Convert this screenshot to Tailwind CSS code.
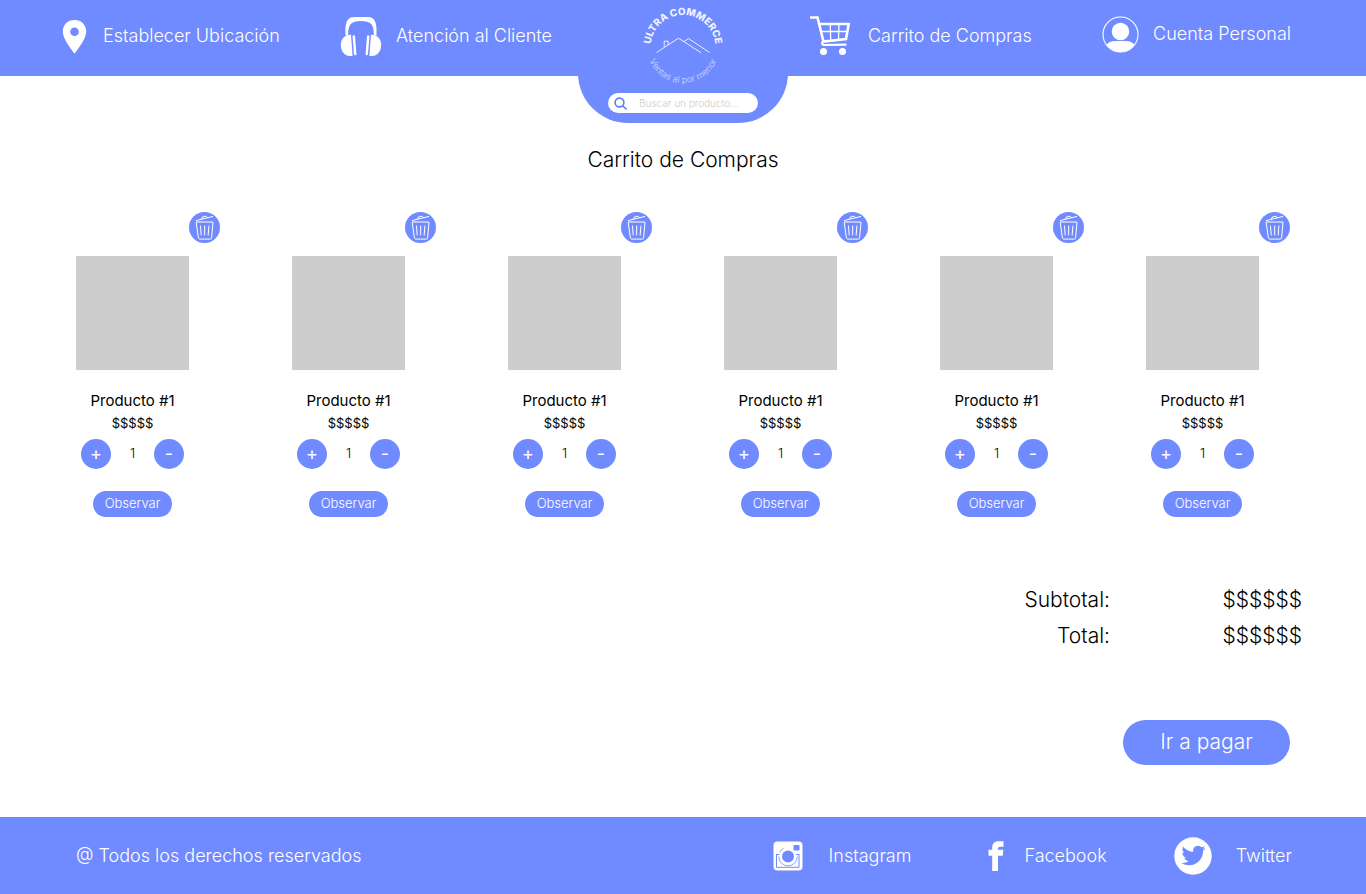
<!DOCTYPE html>
<html lang="es">
<head>
<meta charset="utf-8">
<meta name="viewport" content="width=device-width, initial-scale=1">
<title>Ultra Commerce – Carrito de Compras</title>
<script src="https://cdn.jsdelivr.net/npm/@tailwindcss/browser@4"></script>
</head>
<body class="flex min-h-screen flex-col bg-white font-['Inter','Liberation_Sans',sans-serif] text-black">

<!-- Shared icon -->
<svg class="hidden" aria-hidden="true">
  <symbol id="trash" viewBox="0 0 31 31">
    <g fill="none" stroke="#fff" stroke-width="1" stroke-linecap="round" stroke-linejoin="round">
      <path d="M7.500 10h16.500l-1.400 15.800q-.2 1.300-1.400 1.300h-10.400q-1.200 0-1.400-1.300z"/>
      <path d="M7.300 8.600L23.700 4.500M12.500 7l.5-1.800 4-1 1.200 1.400"/>
      <path d="M11.500 14l.7 9M15.700 14v9M19.900 14l-.7 9"/>
    </g>
  </symbol>
</svg>

<header class="grid h-[76px] shrink-0 grid-cols-[1fr_210px_1fr] bg-[#708aff] text-lg leading-6 font-light text-white">
  <nav class="flex h-[72px] items-center justify-between pr-[26px] pl-[62px]" aria-label="Servicios">
    <a href="#" class="flex items-center gap-4 whitespace-nowrap">
      <svg class="h-[35px] w-[25px]" viewBox="0 0 25 35" fill="#fff" aria-hidden="true"><path fill-rule="evenodd" d="M12.500 1C5.500 1 .8 5.800.8 12.500c0 7 7.200 16 11.700 22.300C17 28.500 24.200 19.500 24.200 12.500 24.200 5.800 19.500 1 12.500 1zm0 7.500a4.300 4.300 0 1 1 0 8.600 4.300 4.300 0 0 1 0-8.600z"/></svg>
      Establecer Ubicación
    </a>
    <a href="#" class="flex items-center gap-[14px] whitespace-nowrap">
      <svg class="h-[41px] w-[42px]" viewBox="0 0 42 41" fill="#fff" aria-hidden="true">
        <path d="M5.500 19.500C5 7 6.500 1.200 14 1h14c7.500.2 9 6 8.500 18.500l-2.700-.5C34 8.500 31 5 21 5S8 8.500 8.200 19z"/>
        <path d="M11 18.800l1.600 21.200H10C4 40 .8 34.500.8 29c0-4.800 2.700-9 6.500-9.800zM31 18.800l-1.600 21.200H32c6 0 9.200-5.500 9.200-11 0-4.800-2.700-9-6.500-9.800z"/>
        <path d="M13.800 20.500l1.400 17.500M28.200 20.500L26.800 38" stroke="#fff" stroke-width="2.500" stroke-linecap="round"/>
      </svg>
      Atención al Cliente
    </a>
  </nav>

  <div class="relative z-10 flex h-[123px] flex-col items-center rounded-b-[50px] bg-[#708aff]">
    <a href="#" aria-label="Ultra Commerce">
      <svg class="block h-[93px] w-[90px]" viewBox="0 0 90 93" fill="none">
        <path id="arcTop" d="M12.500 50v-2.500a32.500 32.500 0 0 1 65 0V50"/>
        <path id="arcBottom" d="M8.500 46.500a36.500 36.500 0 0 0 73 0"/>
        <text fill="#fff" fill-opacity=".9" font-size="10" font-weight="800" text-anchor="middle"><textPath href="#arcTop" startOffset="50%">ULTRA COMMERCE</textPath></text>
        <text fill="#fff" fill-opacity=".55" font-size="9" font-weight="400" text-anchor="middle"><textPath href="#arcBottom" startOffset="50%">Ventas al por menor</textPath></text>
        <path d="M18.500 52.500l22-14.300L63 52.700M46 41.500l4.500-3L71.500 52.500M26.200 47v-5.800h4V45" stroke="#fff" stroke-opacity=".85" stroke-width="1"/>
      </svg>
    </a>
    <form class="flex h-5 w-[150px] items-center gap-3 rounded-full bg-white pl-[6px]" role="search">
      <button type="submit" aria-label="Buscar"><svg class="block size-[13px]" viewBox="0 0 13 13" fill="none" stroke="#5f7bf5" stroke-width="1.600" stroke-linecap="round" aria-hidden="true"><circle cx="5.500" cy="5.500" r="4.400"/><path d="M8.800 8.800l3.200 3.200"/></svg></button>
      <input type="search" aria-label="Buscar un producto" placeholder="Buscar un producto..." class="min-w-0 flex-1 text-[10px] leading-4 text-gray-700 outline-none placeholder:text-[#cccccc]">
    </form>
  </div>

  <nav class="flex h-[72px] items-center justify-between pr-[75px] pl-[22px]" aria-label="Cuenta">
    <a href="#" class="flex items-center gap-4 whitespace-nowrap">
      <svg class="h-[40px] w-[42px]" viewBox="0 0 42 40" fill="none" stroke="#fff" aria-hidden="true">
        <path d="M0 1.500H7.500L13.500 25.500l22.500-2.500L38.700 8H9.500" stroke-width="2.600"/>
        <path d="M13 25q-2 4 1 4L36.500 28.600" stroke-width="2.200"/>
        <path d="M11.500 15.500h26M20.200 8l.5 16M29 8l-.5 15" stroke-width="1.300"/>
        <circle cx="13.500" cy="35.500" r="3.500" fill="#fff" stroke="none"/><circle cx="32.500" cy="35.500" r="3.500" fill="#fff" stroke="none"/>
      </svg>
      Carrito de Compras
    </a>
    <a href="#" class="flex items-center gap-[14px] pb-1 whitespace-nowrap">
      <svg class="size-[37px]" viewBox="0 0 37 37" aria-hidden="true">
        <circle cx="18.500" cy="18.500" r="17.500" fill="none" stroke="#fff" stroke-width="1.100"/>
        <circle cx="18.500" cy="15.500" r="8.700" fill="#fff"/>
        <path d="M4.500 29q2.500-4 8.500-4h11q6 0 8.500 4a17.500 17.500 0 0 1-28 0z" fill="#fff"/>
      </svg>
      Cuenta Personal
    </a>
  </nav>
</header>

<main class="flex-1 pb-[52px]">
  <h1 class="pt-[70px] text-center text-[21px] leading-7 font-light">Carrito de Compras</h1>

  <ul id="products" class="mt-[38px] grid grid-cols-[216fr_216fr_216fr_216fr_206fr_144px] px-[76px]"></ul>

  <template id="product">
    <li class="w-36">
      <button type="button" aria-label="Eliminar producto" class="ml-auto block size-[31px] rounded-full bg-[#708aff]"><svg class="size-full" aria-hidden="true"><use href="#trash"/></svg></button>
      <div class="mt-[13px] flex w-[113px] flex-col items-center">
        <div class="h-[114px] w-full bg-[#cdcdcd]"></div>
        <h2 class="mt-[19px] text-[15px] leading-6 whitespace-nowrap">Producto #1</h2>
        <p class="text-[13px] leading-5">$$$$$</p>
        <div class="mt-[6px] flex w-full items-center justify-between px-[5px]">
          <button type="button" aria-label="Aumentar" class="size-[30px] rounded-full bg-[#708aff] text-lg leading-none text-white">+</button>
          <output class="pb-[2px] text-[13px] leading-5 font-light">1</output>
          <button type="button" aria-label="Disminuir" class="size-[30px] rounded-full bg-[#708aff] text-lg leading-none text-white">-</button>
        </div>
        <button type="button" class="mt-[22px] h-[26px] w-[79px] rounded-full bg-[#708aff] pb-[2px] text-[13px] leading-5 font-light text-white">Observar</button>
      </div>
    </li>
  </template>

  <section class="mt-[65px] flex flex-col items-end" aria-label="Resumen">
    <dl class="mr-16 grid grid-cols-[auto_192px] text-right text-[21px] leading-9 font-light">
      <dt>Subtotal:</dt><dd>$$$$$$</dd>
      <dt>Total:</dt><dd>$$$$$$</dd>
    </dl>
    <button type="button" class="mt-[66px] mr-[76px] h-[45px] w-[167px] rounded-full bg-[#708aff] pb-[2px] text-[21px] leading-7 font-light text-white">Ir a pagar</button>
  </section>
</main>

<footer class="flex h-[77px] shrink-0 items-center justify-between bg-[#708aff] pr-[74px] pl-[76px] text-lg leading-6 font-light text-white">
  <p>@ Todos los derechos reservados</p>
  <nav class="flex items-center" aria-label="Redes sociales">
    <a href="#" class="mr-[77px] flex items-center gap-[26px]">
      <svg class="size-[30px]" viewBox="0 0 30 30" aria-hidden="true">
        <rect x=".5" y=".5" width="29" height="29" rx="4" fill="#fff"/>
        <path d="M3.500 13v13.300h22.500V13" fill="none" stroke="#708aff" stroke-width="1"/>
        <circle cx="15" cy="15" r="9.500" fill="#fff"/>
        <path d="M3.500 13.500h3M23 13.500h3" stroke="#708aff"/>
        <circle cx="15" cy="15.500" r="6" fill="#708aff"/>
        <path d="M6.500 11Q8 8.500 10.500 7.500M5.700 15.500a9.300 9.300 0 0 0 18.600 0" stroke="#708aff" stroke-width=".8" fill="none"/>
        <rect x="20.500" y="4" width="6" height="5.500" rx="1" fill="#708aff"/>
      </svg>
      Instagram
    </a>
    <a href="#" class="mr-[67px] flex items-center gap-5">
      <svg class="h-[30px] w-4" viewBox="0 0 16 30" fill="#fff" aria-hidden="true"><path d="M4.200 30V14.800H.5V8.800h3.700V7C4.200 2.500 6.500.3 10.500.3h5v5.500h-3.200c-1.800 0-2.300.8-2.300 2.300v.7h5.300l-.6 6H10V30z"/></svg>
      Facebook
    </a>
    <a href="#" class="flex items-center gap-6">
      <svg class="size-[38px]" viewBox="0 0 38 38" aria-hidden="true">
        <circle cx="19" cy="19" r="18.700" fill="#fff"/>
        <path transform="translate(7.500 6.500)" fill="#708aff" d="M23.950 4.570a10 10 0 0 1-2.820.770 4.960 4.960 0 0 0 2.160-2.720c-.950.550-2 .950-3.130 1.180a4.920 4.920 0 0 0-8.380 4.480C7.690 8.100 4.070 6.130 1.640 3.160a4.820 4.820 0 0 0-.670 2.480c0 1.710.870 3.210 2.190 4.100a4.900 4.900 0 0 1-2.230-.620v.060a4.920 4.920 0 0 0 3.950 4.830 5 5 0 0 1-2.210.080 4.940 4.940 0 0 0 4.600 3.420A9.870 9.870 0 0 1 0 19.540a13.990 13.990 0 0 0 7.550 2.210c9.050 0 14-7.500 14-13.980 0-.210 0-.420-.020-.630a9.940 9.940 0 0 0 2.460-2.550z"/>
      </svg>
      Twitter
    </a>
  </nav>
</footer>

<script>
  const list = document.getElementById('products');
  const card = document.getElementById('product');
  for (let i = 0; i < 6; i++) list.append(card.content.cloneNode(true));
</script>
</body>
</html>
